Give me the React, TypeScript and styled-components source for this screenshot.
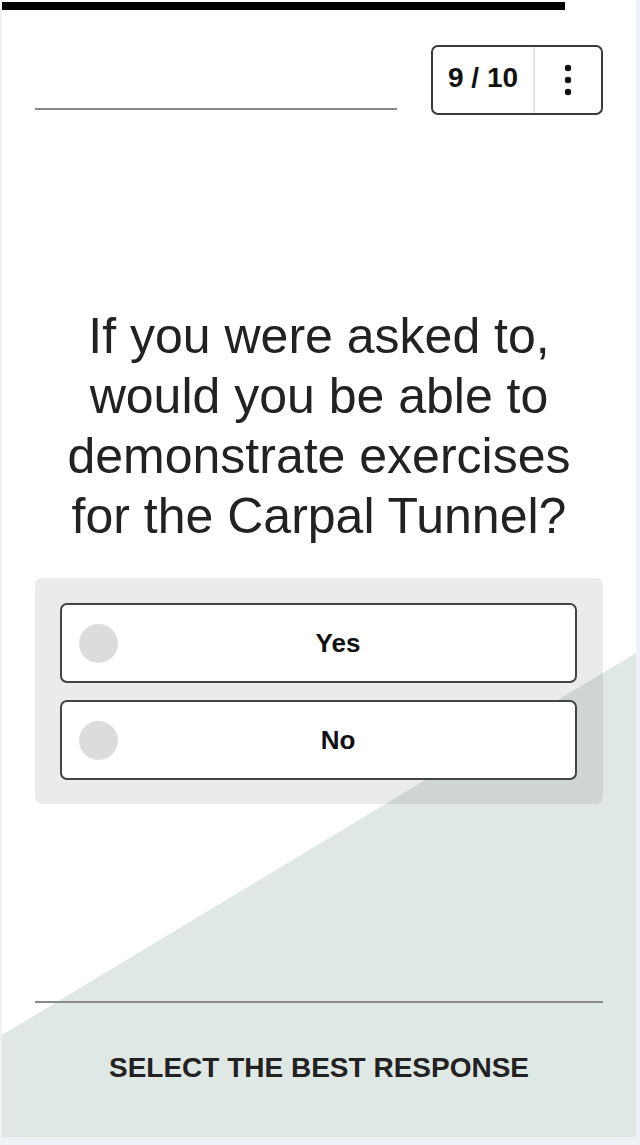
import { JSX } from "react";
import styled, { createGlobalStyle } from "styled-components";

const GlobalStyle = createGlobalStyle`
  html, body {
    margin: 0;
    padding: 0;
    background: #eef2f6;
    font-family: "Liberation Sans", Arial, Helvetica, sans-serif;
  }
`;

const Card = styled.div`
  position: relative;
  isolation: isolate;
  margin: 0 4px 0 2px;
  height: 1137px;
  background: #ffffff;
  display: flex;
  flex-direction: column;

  &::before {
    content: "";
    position: absolute;
    inset: 0;
    z-index: -1;
    background: #e0e8e6;
    clip-path: polygon(100% 653px, 100% 100%, 0 100%, 0 1035px);
  }
`;

const ProgressTrack = styled.div`
  margin-top: 2px;
  height: 8px;
  margin-right: 8px;
`;

const ProgressFill = styled.div`
  height: 100%;
  background: #000000;
`;

const Header = styled.div`
  display: flex;
  align-items: flex-end;
  margin-top: 35px;
  padding: 0 33px;
`;

const TitleLine = styled.div`
  width: 362px;
  height: 2px;
  margin-bottom: 5px;
  background: #8a8a8a;
`;

const Counter = styled.div`
  margin-left: auto;
  width: 172px;
  height: 70px;
  box-sizing: border-box;
  border: 2px solid #3a3a3a;
  border-radius: 7px;
  display: flex;
  background: #ffffff;
`;

const CounterText = styled.div`
  width: 102px;
  display: flex;
  align-items: center;
  justify-content: center;
  padding-bottom: 4px;
  box-sizing: border-box;
  font-size: 28px;
  font-weight: 700;
  color: #111111;
  border-right: 2px solid #e4e4e4;
`;

const MenuButton = styled.div`
  flex: 1;
  display: flex;
  align-items: center;
  justify-content: center;
`;

const Question = styled.h1`
  margin: 191px 60px 0;
  font-size: 50px;
  line-height: 60px;
  font-weight: 400;
  text-align: center;
  color: #222222;
`;

const Options = styled.div`
  margin: 32px 33px 0 33px;
  padding: 25px 26px 24px 25px;
  border-radius: 7px;
  background: rgba(0, 0, 0, 0.08);
  display: flex;
  flex-direction: column;
  gap: 17px;
`;

const Option = styled.div`
  height: 80px;
  box-sizing: border-box;
  border: 2px solid #444444;
  border-radius: 7px;
  background: #ffffff;
  display: flex;
  align-items: center;
  padding: 0 17px;
`;

const Radio = styled.span`
  width: 39px;
  height: 39px;
  border-radius: 50%;
  background: #dcdcdc;
  flex-shrink: 0;
`;

const OptionLabel = styled.span`
  flex: 1;
  text-align: center;
  font-size: 26px;
  font-weight: 700;
  color: #111111;
`;

const Footer = styled.div`
  margin: 197px 33px 0;
`;

const FooterLine = styled.div`
  height: 2px;
  background: #8a8a8a;
`;

const Hint = styled.div`
  padding-top: 49px;
  line-height: 32px;
  text-align: center;
  font-size: 28px;
  font-weight: 700;
  color: #222222;
`;

const KebabIcon = (): JSX.Element => (
  <svg width="8" height="32" viewBox="0 0 8 32" fill="#111">
    <circle cx="4" cy="4" r="3.2" />
    <circle cx="4" cy="16" r="3.2" />
    <circle cx="4" cy="28" r="3.2" />
  </svg>
);

const current = 9;
const total = 10;
const answers = ["Yes", "No"];

const App = (): JSX.Element => {
  return (
    <>
      <GlobalStyle />
      <Card>
        <ProgressTrack>
          <ProgressFill style={{ width: `${(current / total) * 100}%` }} />
        </ProgressTrack>
        <Header>
          <TitleLine />
          <Counter>
            <CounterText>
              {current} / {total}
            </CounterText>
            <MenuButton>
              <KebabIcon />
            </MenuButton>
          </Counter>
        </Header>
        <Question>
          If you were asked to, would you be able to demonstrate exercises for
          the Carpal Tunnel?
        </Question>
        <Options>
          {answers.map((a) => (
            <Option key={a}>
              <Radio />
              <OptionLabel>{a}</OptionLabel>
            </Option>
          ))}
        </Options>
        <Footer>
          <FooterLine />
          <Hint>SELECT THE BEST RESPONSE</Hint>
        </Footer>
      </Card>
    </>
  );
};

export default App;
